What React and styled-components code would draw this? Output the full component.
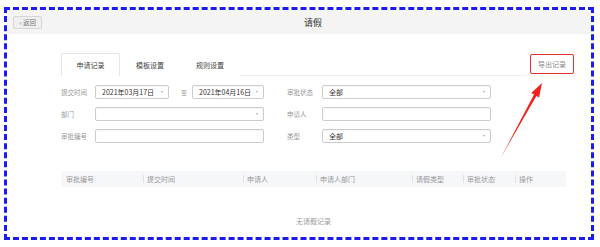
import React from 'react';
import styled, { createGlobalStyle } from 'styled-components';

const GlobalStyle = createGlobalStyle`
  html, body {
    margin: 0;
    padding: 0;
    background: #ffffff;
  }
  body {
    font-family: "Noto Sans CJK SC", "Noto Sans", sans-serif;
  }
  * {
    box-sizing: border-box;
  }
`;

const Page = styled.div`
  position: relative;
  width: 600px;
  height: 247px;
  padding: 7px 0 0 4px;
  overflow: hidden;
`;

const Frame = styled.div`
  width: 590px;
  height: 233px;
  border: 3px dashed #1c1cf2;
  display: flex;
  flex-direction: column;
`;

const Header = styled.div`
  height: 24px;
  background: #f4f4f4;
  display: flex;
  align-items: center;
  padding: 0 7px 0 6px;
`;

const BackButton = styled.div`
  height: 13px;
  width: 29px;
  border: 1px solid #d6d6d6;
  border-radius: 2px;
  background: #efefef;
  font-size: 6.5px;
  color: #777;
  display: flex;
  align-items: center;
  justify-content: center;
  gap: 1px;
`;

const BackMark = styled.span`
  color: #aaa;
`;

const Title = styled.div`
  flex: 1;
  text-align: center;
  font-size: 9px;
  color: #333;
`;

const Body = styled.div`
  padding-left: 54px;
`;

const TabsRow = styled.div`
  margin-top: 19px;
  width: 513px;
  display: flex;
  align-items: flex-start;
`;

const TabList = styled.div`
  flex: 1;
  height: 23px;
  display: flex;
  border-bottom: 1px solid #eeeeee;
`;

const Tab = styled.div`
  width: ${(p) => (p.$active ? '59px' : '60px')};
  height: 23px;
  display: flex;
  align-items: center;
  justify-content: center;
  font-size: 7px;
  color: #444;
  background: #fff;
  border: 1px solid ${(p) => (p.$active ? '#e6e6e6' : 'transparent')};
  border-bottom: none;
  border-radius: 2px 2px 0 0;
`;

const ExportButton = styled.div`
  margin: 1px 0 0 3px;
  width: 44px;
  height: 20px;
  border: 1.5px solid #e2312b;
  border-radius: 2px;
  display: flex;
  align-items: center;
  justify-content: center;
  font-size: 7px;
  color: #888;
`;

const FormGrid = styled.div`
  margin-top: 9px;
  display: grid;
  grid-template-columns: 203px 204px;
  column-gap: 23px;
  row-gap: 8px;
`;

const Field = styled.div`
  display: flex;
  align-items: center;
  height: 14px;
`;

const Label = styled.div`
  width: ${(p) => p.$width || '34px'};
  font-size: 6.5px;
  color: #999;
`;

const Control = styled.div`
  width: 169px;
  display: flex;
  align-items: center;
`;

const Box = styled.div`
  width: ${(p) => p.$width || '169px'};
  height: 14px;
  border: 1px solid #cccccc;
  border-radius: 2px;
  background: #fff;
  box-shadow: inset 0 1px 1px rgba(0, 0, 0, 0.04);
  display: flex;
  align-items: center;
  justify-content: space-between;
  padding: 0 5px 0 6px;
  font-size: 7px;
  color: #333;
`;

const Caret = styled.span`
  width: 0;
  height: 0;
  border-left: 1.5px solid transparent;
  border-right: 1.5px solid transparent;
  border-top: 2px solid #aaa;
`;

const Between = styled.div`
  width: 23px;
  padding-left: 12px;
  font-size: 6px;
  color: #999;
`;

const Table = styled.div`
  margin-top: 28px;
  width: 505px;
`;

const HeadRow = styled.div`
  height: 16px;
  background: #f6f7f9;
  display: flex;
`;

const HeadCell = styled.div`
  position: relative;
  width: ${(p) => p.$w}px;
  display: flex;
  align-items: center;
  padding-left: ${(p) => (p.$first ? '5px' : '4px')};
  font-size: 7px;
  color: #999;

  &::before {
    content: '';
    display: ${(p) => (p.$first ? 'none' : 'block')};
    position: absolute;
    left: 0;
    top: 4px;
    height: 8px;
    border-left: 1px solid #e2e2e2;
  }
`;

const Empty = styled.div`
  margin-top: 29px;
  text-align: center;
  font-size: 7px;
  color: #999;
`;

const Arrow = styled.svg`
  position: absolute;
  left: 0;
  top: 0;
  pointer-events: none;
`;

const columns = [
  { title: '审批编号', w: 82 },
  { title: '提交时间', w: 100 },
  { title: '申请人', w: 73 },
  { title: '申请人部门', w: 96 },
  { title: '请假类型', w: 51 },
  { title: '审批状态', w: 52 },
  { title: '操作', w: 51 },
];

export default function App() {
  return (
    <Page>
      <GlobalStyle />
      <Frame>
        <Header>
          <BackButton>
            <BackMark>«</BackMark>
            <span>返回</span>
          </BackButton>
          <Title>请假</Title>
        </Header>
        <Body>
          <TabsRow>
            <TabList>
              <Tab $active>申请记录</Tab>
              <Tab>模板设置</Tab>
              <Tab>规则设置</Tab>
            </TabList>
            <ExportButton>导出记录</ExportButton>
          </TabsRow>

          <FormGrid>
            <Field>
              <Label>提交时间</Label>
              <Control>
                <Box $width="74px">
                  2021年03月17日<Caret />
                </Box>
                <Between>至</Between>
                <Box $width="72px">
                  2021年04月16日<Caret />
                </Box>
              </Control>
            </Field>
            <Field>
              <Label $width="35px">审批状态</Label>
              <Box>
                全部<Caret />
              </Box>
            </Field>
            <Field>
              <Label>部门</Label>
              <Box>
                <span />
                <Caret />
              </Box>
            </Field>
            <Field>
              <Label $width="35px">申请人</Label>
              <Box />
            </Field>
            <Field>
              <Label>审批编号</Label>
              <Box />
            </Field>
            <Field>
              <Label $width="35px">类型</Label>
              <Box>
                全部<Caret />
              </Box>
            </Field>
          </FormGrid>

          <Table>
            <HeadRow>
              {columns.map((c, i) => (
                <HeadCell key={c.title} $w={c.w} $first={i === 0}>
                  {c.title}
                </HeadCell>
              ))}
            </HeadRow>
            <Empty>无请假记录</Empty>
          </Table>
        </Body>
      </Frame>

      <Arrow width="600" height="247" viewBox="0 0 600 247">
        <polygon
          points="501,157.5 536.4,95.9 539.1,97.4 542,83 531.3,93 534,94.5"
          fill="#f2221c"
        />
      </Arrow>
    </Page>
  );
}
